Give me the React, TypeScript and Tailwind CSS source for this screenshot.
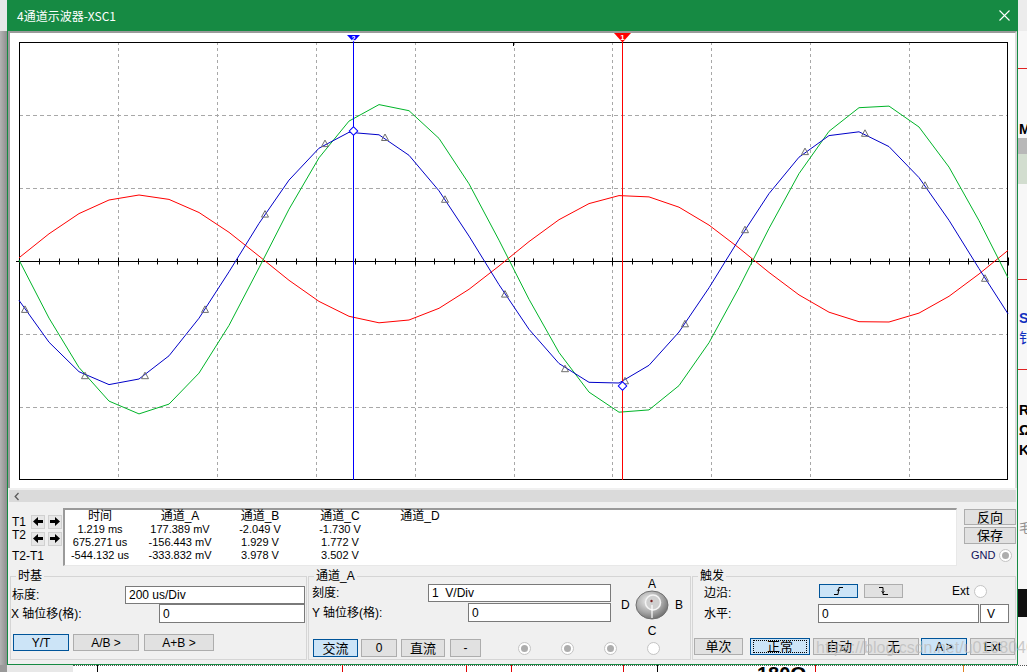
import React from 'react'

// plot geometry, in page pixels
const X0 = 19
const X1 = 1008
const Y0 = 42
const Y1 = 480
const DX = (X1 - X0) / 10
const DY = (Y1 - Y0) / 6
const AXIS_Y = 261.5

type Pt = [number, number]

function wave(peakX: number, amp: number, cy: number, period: number, step = 30): Pt[] {
  const f = (x: number) => cy - amp * Math.cos((2 * Math.PI * (x - peakX)) / period)
  const pts: Pt[] = []
  for (let x = X0; x < X1; x += step) pts.push([x, f(x)])
  pts.push([X1, f(X1)])
  return pts
}

const toStr = (pts: Pt[]) => pts.map(([x, y]) => `${x.toFixed(1)},${y.toFixed(1)}`).join(' ')
const blueY = (x: number) => 258 - 127 * Math.cos((2 * Math.PI * (x - 360)) / 490)

function Scope() {
  const red = wave(140, 64, 259, 490)
  const green = wave(386, 155, 259, 490)
  const blue = wave(360, 127, 258, 490)
  const markers = Array.from({ length: 17 }, (_, i) => 25 + i * 60)
  const vGrid = Array.from({ length: 9 }, (_, i) => Math.round(X0 + DX * (i + 1)) + 0.5)
  const hGrid = Array.from({ length: 5 }, (_, i) => Math.round(Y0 + DY * (i + 1)) + 0.5)
  const ticks = Array.from({ length: 51 }, (_, i) => Math.round(X0 + (DX / 5) * i) + 0.5)

  return (
    <svg width={1005} height={455} viewBox="10 33 1005 455" className="block">
      {vGrid.map((x) => (
        <line key={'v' + x} x1={x} y1={Y0} x2={x} y2={Y1} stroke="#a8a8a8" strokeDasharray="3 3" />
      ))}
      {hGrid.map((y) => (
        <line key={'h' + y} x1={X0} y1={y} x2={X1} y2={y} stroke="#a8a8a8" strokeDasharray="4 3" />
      ))}
      <rect x={X0 + 0.5} y={Y0 + 0.5} width={X1 - X0 - 1} height={Y1 - Y0 - 1} fill="none" stroke="#000" />
      <line x1={16} y1={AXIS_Y} x2={X1} y2={AXIS_Y} stroke="#000" />
      {ticks.map((x, i) => (
        <line
          key={'t' + i}
          x1={x}
          y1={AXIS_Y - (i % 5 === 0 ? 4 : 3)}
          x2={x}
          y2={AXIS_Y + (i % 5 === 0 ? 4 : 3)}
          stroke="#000"
        />
      ))}
      <line x1={513.5} y1={Y0} x2={513.5} y2={Y0 + 4} stroke="#000" />

      <polyline points={toStr(red)} fill="none" stroke="#ff0000" />
      <polyline points={toStr(green)} fill="none" stroke="#00b428" />
      <polyline points={toStr(blue)} fill="none" stroke="#0000c8" />
      {markers.map((x) => {
        const y = blueY(x)
        return (
          <polygon
            key={'m' + x}
            points={`${x},${(y - 3.5).toFixed(1)} ${x - 3.5},${(y + 3).toFixed(1)} ${x + 3.5},${(y + 3).toFixed(1)}`}
            fill="none"
            stroke="#6e6e6e"
          />
        )
      })}

      {/* cursor T2 */}
      <line x1={353.5} y1={Y0} x2={353.5} y2={Y1} stroke="#0000ff" />
      <polygon points="347,35 360,35 353.5,42" fill="#0000ff" />
      <text x={353.5} y={40.5} fontSize={7} fontWeight={700} fill="#fff" textAnchor="middle" fontFamily="Liberation Sans, sans-serif">
        2
      </text>
      <rect x={350.5} y={128} width={6} height={6} fill="#fff" stroke="#0000ff" transform="rotate(45 353.5 131)" />
      {/* cursor T1 */}
      <line x1={622.5} y1={Y0} x2={622.5} y2={Y1} stroke="#ff0000" />
      <polygon points="614,33 631,33 622.5,42.5" fill="#ff0000" />
      <text x={622.5} y={40} fontSize={8} fontWeight={700} fill="#fff" textAnchor="middle" fontFamily="Liberation Sans, sans-serif">
        1
      </text>
      <rect x={619.5} y={383} width={6} height={6} fill="#fff" stroke="#0000ff" transform="rotate(45 622.5 386)" />
    </svg>
  )
}

function Btn({
  sel,
  className = '',
  children,
}: {
  sel?: boolean
  className?: string
  children: React.ReactNode
}) {
  return (
    <div
      className={`flex items-center justify-center border text-[12px] leading-none ${
        sel ? 'bg-[#cce4f7] border-[#005499]' : 'bg-[#e1e1e1] border-[#adadad]'
      } ${className}`}
    >
      {children}
    </div>
  )
}

function Field({ className = '', children }: { className?: string; children: React.ReactNode }) {
  return (
    <div className={`flex items-center bg-white border border-[#7a7a7a] pl-[3px] text-[12px] leading-none ${className}`}>
      {children}
    </div>
  )
}

function Radio({ on, className = '' }: { on?: boolean; className?: string }) {
  return (
    <div
      className={`w-[13px] h-[13px] shrink-0 rounded-full border border-[#c4c4c4] bg-white flex items-center justify-center ${className}`}
    >
      {on && <div className="w-[7px] h-[7px] rounded-full bg-[#adadad]" />}
    </div>
  )
}

function Arrow({ right }: { right?: boolean }) {
  return (
    <div className="w-[14px] h-[14px] bg-[#e6e6e6] border border-[#d0d0d0] flex items-center justify-center">
      <svg width="10" height="9" viewBox="0 0 10 9">
        <polygon
          points={right ? '10,4.5 5,0 5,3 0,3 0,6 5,6 5,9' : '0,4.5 5,0 5,3 10,3 10,6 5,6 5,9'}
          fill="#000"
        />
      </svg>
    </div>
  )
}

function Group({ title, className = '', children }: { title: string; className?: string; children: React.ReactNode }) {
  return (
    <fieldset className={`mt-[1px] h-[92px] border border-[#d5d5d5] shrink-0 ${className}`}>
      <legend className="ml-[5px] px-[2px] text-[12px] leading-[16px]">{title}</legend>
      {children}
    </fieldset>
  )
}

function Knob() {
  return (
    <svg width="34" height="30" viewBox="0 0 34 30">
      <defs>
        <radialGradient id="kg" cx="0.4" cy="0.35" r="0.7">
          <stop offset="0" stopColor="#f0f0f0" />
          <stop offset="0.6" stopColor="#a8a8a8" />
          <stop offset="1" stopColor="#6a6a6a" />
        </radialGradient>
      </defs>
      <ellipse cx="17" cy="15" rx="16" ry="14" fill="url(#kg)" stroke="#707070" />
      <circle cx="18" cy="12.5" r="7.5" fill="#cfcfcf" stroke="#f4f4f4" strokeWidth="1.5" />
      <line x1="17" y1="15" x2="17" y2="28" stroke="#fff" strokeWidth="1.2" />
      <circle cx="16.5" cy="11" r="1.2" fill="#7a2020" />
    </svg>
  )
}

const columns = [
  { h: '时间', v: ['1.219 ms', '675.271 us', '-544.132 us'], w: 'w-[75px] pr-[5px]' },
  { h: '通道_A', v: ['177.389 mV', '-156.443 mV', '-333.832 mV'], w: 'w-[80px]' },
  { h: '通道_B', v: ['-2.049 V', '1.929 V', '3.978 V'], w: 'w-[80px]' },
  { h: '通道_C', v: ['-1.730 V', '1.772 V', '3.502 V'], w: 'w-[80px]' },
  { h: '通道_D', v: ['', '', ''], w: 'w-[80px]' },
]

function DataRow() {
  return (
    <div className="flex h-[61px] mt-[4px]">
      {/* cursor labels */}
      <div className="w-[55px] shrink-0 flex flex-col pl-[4px] pt-[8px] text-[12px] leading-[12px]">
        <div className="flex items-center h-[15px]">
          <span className="w-[19px]">T1</span>
          <Arrow />
          <div className="ml-[3px]">
            <Arrow right />
          </div>
        </div>
        <div className="flex items-center h-[15px] mt-[2px]">
          <span className="w-[19px] -mt-[8px]">T2</span>
          <Arrow />
          <div className="ml-[3px]">
            <Arrow right />
          </div>
        </div>
        <span className="mt-[4px]">T2-T1</span>
      </div>

      {/* readout */}
      <div className="w-[894px] shrink-0 mt-[2px] h-[58px] bg-white border-t-2 border-l-2 border-r border-b border-t-[#9a9a9a] border-l-[#9a9a9a] border-r-[#e8e8e8] border-b-[#e8e8e8] flex">
        {columns.map((c) => (
          <div key={c.h} className={`${c.w} flex flex-col items-center`}>
            <span className="h-[13px] leading-[13px] text-[12px]">{c.h}</span>
            {c.v.map((v, i) => (
              <span key={i} className="h-[13px] leading-[13px] text-[11px] whitespace-nowrap">
                {v}
              </span>
            ))}
          </div>
        ))}
      </div>

      {/* right buttons */}
      <div className="ml-[7px] flex flex-col pt-[3px]">
        <Btn className="w-[52px] h-[16px] text-[13px]">反向</Btn>
        <Btn className="w-[52px] h-[17px] mt-[2px] text-[13px]">保存</Btn>
        <div className="flex items-center mt-[5px] ml-[7px]">
          <span className="text-[11px] leading-none text-[#10105a]">GND</span>
          <Radio on className="ml-[4px]" />
        </div>
      </div>
    </div>
  )
}

function Controls() {
  return (
    <div className="flex h-[97px] pl-[2px]">
      <Group title="时基" className="w-[297px]">
        <div className="flex items-center h-[18px] mt-[2px]">
          <span className="w-[114px] pl-[1px] leading-none">标度:</span>
          <Field className="w-[180px] h-[18px]">200 us/Div</Field>
        </div>
        <div className="flex items-center h-[19px]">
          <span className="w-[148px] leading-none">X 轴位移(格):</span>
          <Field className="w-[146px] h-[19px]">0</Field>
        </div>
        <div className="flex mt-[11px]">
          <Btn sel className="ml-[2px] w-[56px] h-[17px]">
            Y/T
          </Btn>
          <Btn className="ml-[4px] w-[66px] h-[17px]">A/B &gt;</Btn>
          <Btn className="ml-[5px] w-[70px] h-[17px]">A+B &gt;</Btn>
        </div>
      </Group>

      <Group title="通道_A" className="w-[383px] ml-[1px]">
        <div className="flex h-[55px]">
          <div className="w-[303px] flex flex-col">
            <div className="flex items-center h-[18px]">
              <span className="w-[119px] pl-[3px] leading-none">刻度:</span>
              <Field className="w-[183px] h-[18px]">1&nbsp;&nbsp;V/Div</Field>
            </div>
            <div className="flex items-center h-[19px] mt-[1px]">
              <span className="w-[159px] pl-[3px] leading-none">Y 轴位移(格):</span>
              <Field className="w-[143px] h-[19px]">0</Field>
            </div>
          </div>
          <div className="ml-[5px] -mt-[6px] w-[70px] flex flex-col items-center text-[12px]">
            <span className="leading-[12px]">A</span>
            <div className="flex items-center">
              <span className="w-[8px] leading-none">D</span>
              <div className="mx-[6px]">
                <Knob />
              </div>
              <span className="w-[8px] leading-none">B</span>
            </div>
            <span className="leading-[12px] mt-[5px]">C</span>
          </div>
        </div>
        <div className="flex items-center h-[18px]">
          <Btn sel className="ml-[4px] w-[45px] h-[18px] text-[13px]">
            交流
          </Btn>
          <Btn className="ml-[3px] w-[36px] h-[18px]">0</Btn>
          <Btn className="ml-[4px] w-[44px] h-[18px] text-[13px]">直流</Btn>
          <Btn className="ml-[5px] w-[31px] h-[18px]">-</Btn>
          <Radio on className="ml-[37px]" />
          <Radio on className="ml-[30px]" />
          <Radio on className="ml-[30px]" />
          <Radio className="ml-[30px]" />
        </div>
      </Group>

      <Group title="触发" className="w-[324px] ml-[1px]">
        <div className="flex items-center h-[14px]">
          <span className="w-[126px] pl-[11px] leading-none mt-[3px]">边沿:</span>
          <Btn sel className="w-[39px] h-[14px]">
            <svg width="11" height="10" viewBox="0 0 11 10">
              <path d="M1 8.5 H5 L6 1.5 H10" fill="none" stroke="#000" />
              <path d="M4 5 L5.5 3 L6.5 5" fill="none" stroke="#000" strokeWidth="0.8" />
            </svg>
          </Btn>
          <Btn className="ml-[6px] w-[39px] h-[14px]">
            <svg width="11" height="10" viewBox="0 0 11 10">
              <path d="M1 1.5 H5 V8.5 H10" fill="none" stroke="#000" />
              <path d="M3.5 5 L5 7 L6.5 5" fill="none" stroke="#000" strokeWidth="0.8" />
            </svg>
          </Btn>
          <span className="ml-[49px] leading-none text-[12px]">Ext</span>
          <Radio className="ml-[5px]" />
        </div>
        <div className="flex items-center h-[19px] mt-[6px]">
          <span className="w-[125px] pl-[11px] leading-none">水平:</span>
          <Field className="w-[161px] h-[19px]">0</Field>
          <Field className="ml-[1px] w-[29px] h-[19px] pl-[6px]">V</Field>
        </div>
        <div className="flex mt-[15px]">
          <Btn className="ml-[1px] w-[49px] h-[17px] text-[13px]">单次</Btn>
          <Btn sel className="ml-[7px] w-[60px] h-[17px] text-[13px]">
            <span className="w-[54px] h-[13px] border border-dotted border-black flex items-center justify-center">
              正常
            </span>
          </Btn>
          <Btn className="ml-[3px] w-[52px] h-[17px] text-[13px]">自动</Btn>
          <Btn className="ml-[3px] w-[51px] h-[17px] text-[13px]">无</Btn>
          <Btn sel className="ml-[2px] w-[46px] h-[17px]">
            A &gt;
          </Btn>
          <Btn className="ml-[3px] w-[45px] h-[17px]">Ext</Btn>
        </div>
      </Group>
    </div>
  )
}

function Window() {
  return (
    <div className="w-[1011px] shrink-0 flex flex-col border-x border-b border-[#168a43] bg-[#f0f0f0]">
      <div className="h-[31px] bg-[#168a43] flex items-center justify-between pl-[9px] pr-[7px] text-white">
        <span className="text-[12px] leading-none font-['Noto_Sans_CJK_SC','Liberation_Sans',sans-serif]">4通道示波器-XSC1</span>
        <svg width="11" height="11" viewBox="0 0 11 11">
          <path d="M0.5 0.5 L10.5 10.5 M10.5 0.5 L0.5 10.5" stroke="#fff" strokeWidth="1.1" />
        </svg>
      </div>
      <div className="h-[457px] bg-white border-t-2 border-l-2 border-r-2 border-t-[#9a9a9a] border-l-[#9a9a9a] border-r-[#dcdcdc]">
        <Scope />
      </div>
      <div className="mt-[2px] mx-[1px] h-[12px] bg-[#dadada] flex items-center pl-[5px]">
        <svg width="6" height="9" viewBox="0 0 6 9">
          <path d="M4.5 1 L1.2 4.5 L4.5 8" stroke="#5a5a5a" strokeWidth="1.3" fill="none" />
        </svg>
      </div>
      <DataRow />
      <Controls />
    </div>
  )
}

function RightStrip() {
  return (
    <div className="flex-1 flex flex-col bg-[#f7f7f7] overflow-hidden text-[14px] leading-none">
      <div className="h-[31px] bg-[#ececec]" />
      <div className="h-[37px]" />
      <div className="h-[1px] bg-[#e02020]" />
      <div className="h-[53px]" />
      <div className="h-[16px] font-bold pl-[1px]">M</div>
      <div className="h-[16px] bg-[#b8b8b8]" />
      <div className="h-[30px] bg-[#d2ddcf]" />
      <div className="h-[95px]" />
      <div className="h-[1px] bg-[#e02020]" />
      <div className="h-[31px]" />
      <div className="h-[20px] font-bold text-[#1030c0] pl-[1px]">S</div>
      <div className="h-[20px] text-[#1030c0] pl-[1px]">钅</div>
      <div className="h-[18px]" />
      <div className="h-[1px] bg-[#e02020]" />
      <div className="h-[33px]" />
      <div className="h-[20px] font-bold pl-[1px]">R</div>
      <div className="h-[20px] font-bold pl-[1px]">Ω</div>
      <div className="h-[20px] font-bold pl-[1px]">K</div>
      <div className="h-[58px]" />
      <div className="h-[18px] text-[#909090] text-[13px] pl-[1px]">毛</div>
      <div className="h-[50px]" />
      <div className="h-[28px] bg-[#101010]" />
    </div>
  )
}

function BottomStrip() {
  return (
    <div className="relative h-[7px] flex bg-white overflow-hidden">
      <div className="w-[7px] bg-[#9a9a9a]" />
      <div className="w-[66px] bg-[#e8e8e8]" />
      <div className="flex-1 border-t border-dotted border-[#555]" />
      {/* background circuit canvas */}
      <div className="absolute left-[97px] top-0 w-[1px] h-[7px] bg-black" />
      <div className="absolute left-[342px] top-0 w-[1px] h-[7px] bg-[#e00000]" />
      <div className="absolute left-[466px] top-0 w-[1px] h-[7px] bg-[#e00000]" />
      <div className="absolute left-[511px] top-0 w-[1px] h-[7px] bg-[#e00000]" />
      <div className="absolute left-[623px] top-0 w-[1px] h-[7px] bg-[#e00000]" />
      <div className="absolute left-[657px] top-0 w-[1px] h-[7px] bg-black" />
      <div className="absolute left-[815px] top-0 w-[1px] h-[7px] bg-[#e00000]" />
      <div className="absolute left-[963px] top-0 w-[1px] h-[7px] bg-[#e08020]" />
      <div className="absolute left-[757px] top-[-1px] text-[20px] font-bold leading-[20px]">180Ω</div>
    </div>
  )
}

export default function App() {
  return (
    <div className="relative w-[1027px] h-[672px] overflow-hidden bg-white text-black text-[12px] font-['Liberation_Sans','Noto_Sans_CJK_SC',sans-serif]">
      <div className="flex h-[665px]">
        <div className="w-[7px] shrink-0 flex flex-col">
          <div className="h-[31px] bg-[#e8e8e8]" />
          <div className="flex-1 bg-linear-to-r from-[#b4b4b4] to-[#8e8e8e]" />
        </div>
        <Window />
        <RightStrip />
      </div>
      <BottomStrip />
      {/* blog watermark over the screenshot */}
      <div className="absolute left-[816px] top-[639px] text-[16px] leading-[18px] text-[#bdbdbd]/80 pointer-events-none whitespace-nowrap">
        https://blog.csdn.net/u010804011
      </div>
    </div>
  )
}
